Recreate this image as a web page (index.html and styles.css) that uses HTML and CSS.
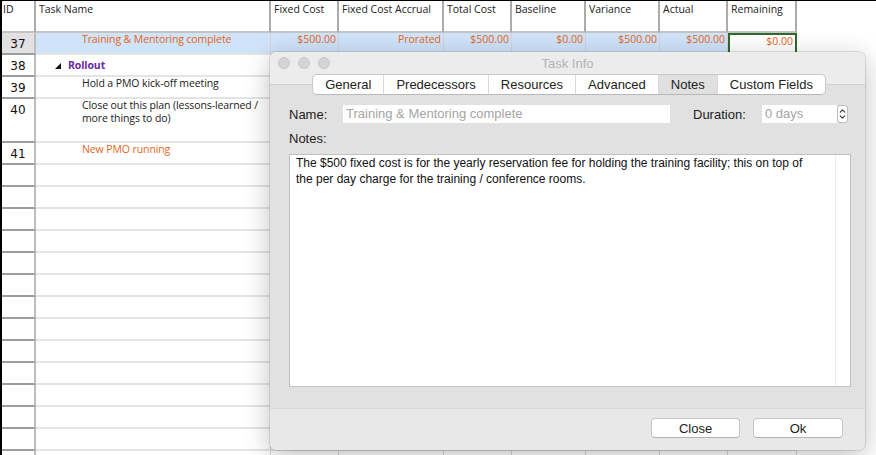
FILE: index.html
```html
<!DOCTYPE html>
<html lang="en">
<head>
    <meta charset="UTF-8">
    <title>Task Info</title>
    <link rel="stylesheet" href="styles.css">
</head>
<body>
    <div class="sheet">
        <div class="row head">
            <div class="cell id">ID</div>
            <div class="cell">Task Name</div>
            <div class="cell">Fixed Cost</div>
            <div class="cell">Fixed Cost Accrual</div>
            <div class="cell">Total Cost</div>
            <div class="cell">Baseline</div>
            <div class="cell">Variance</div>
            <div class="cell">Actual</div>
            <div class="cell">Remaining</div>
        </div>
        <div class="row current">
            <div class="cell id">37</div>
            <div class="cell name sub milestone">Training &amp; Mentoring complete</div>
            <div class="cell num">$500.00</div>
            <div class="cell num">Prorated</div>
            <div class="cell num">$500.00</div>
            <div class="cell num">$0.00</div>
            <div class="cell num">$500.00</div>
            <div class="cell num">$500.00</div>
            <div class="cell num focus">$0.00</div>
        </div>
        <div class="row">
            <div class="cell id">38</div>
            <div class="cell name summary"><span class="toggle"></span>Rollout</div>
            <div class="cell"></div><div class="cell"></div><div class="cell"></div><div class="cell"></div><div class="cell"></div><div class="cell"></div><div class="cell"></div>
        </div>
        <div class="row">
            <div class="cell id">39</div>
            <div class="cell name sub">Hold a PMO kick-off meeting</div>
            <div class="cell"></div><div class="cell"></div><div class="cell"></div><div class="cell"></div><div class="cell"></div><div class="cell"></div><div class="cell"></div>
        </div>
        <div class="row tall">
            <div class="cell id">40</div>
            <div class="cell name sub">Close out this plan (lessons-learned / more things to do)</div>
            <div class="cell"></div><div class="cell"></div><div class="cell"></div><div class="cell"></div><div class="cell"></div><div class="cell"></div><div class="cell"></div>
        </div>
        <div class="row">
            <div class="cell id">41</div>
            <div class="cell name sub milestone">New PMO running</div>
            <div class="cell"></div><div class="cell"></div><div class="cell"></div><div class="cell"></div><div class="cell"></div><div class="cell"></div><div class="cell"></div>
        </div>
        <div class="row"><div class="cell id"></div><div class="cell"></div><div class="cell"></div><div class="cell"></div><div class="cell"></div><div class="cell"></div><div class="cell"></div><div class="cell"></div><div class="cell"></div></div>
        <div class="row"><div class="cell id"></div><div class="cell"></div><div class="cell"></div><div class="cell"></div><div class="cell"></div><div class="cell"></div><div class="cell"></div><div class="cell"></div><div class="cell"></div></div>
        <div class="row"><div class="cell id"></div><div class="cell"></div><div class="cell"></div><div class="cell"></div><div class="cell"></div><div class="cell"></div><div class="cell"></div><div class="cell"></div><div class="cell"></div></div>
        <div class="row"><div class="cell id"></div><div class="cell"></div><div class="cell"></div><div class="cell"></div><div class="cell"></div><div class="cell"></div><div class="cell"></div><div class="cell"></div><div class="cell"></div></div>
        <div class="row"><div class="cell id"></div><div class="cell"></div><div class="cell"></div><div class="cell"></div><div class="cell"></div><div class="cell"></div><div class="cell"></div><div class="cell"></div><div class="cell"></div></div>
        <div class="row"><div class="cell id"></div><div class="cell"></div><div class="cell"></div><div class="cell"></div><div class="cell"></div><div class="cell"></div><div class="cell"></div><div class="cell"></div><div class="cell"></div></div>
        <div class="row"><div class="cell id"></div><div class="cell"></div><div class="cell"></div><div class="cell"></div><div class="cell"></div><div class="cell"></div><div class="cell"></div><div class="cell"></div><div class="cell"></div></div>
        <div class="row"><div class="cell id"></div><div class="cell"></div><div class="cell"></div><div class="cell"></div><div class="cell"></div><div class="cell"></div><div class="cell"></div><div class="cell"></div><div class="cell"></div></div>
        <div class="row"><div class="cell id"></div><div class="cell"></div><div class="cell"></div><div class="cell"></div><div class="cell"></div><div class="cell"></div><div class="cell"></div><div class="cell"></div><div class="cell"></div></div>
        <div class="row"><div class="cell id"></div><div class="cell"></div><div class="cell"></div><div class="cell"></div><div class="cell"></div><div class="cell"></div><div class="cell"></div><div class="cell"></div><div class="cell"></div></div>
        <div class="row"><div class="cell id"></div><div class="cell"></div><div class="cell"></div><div class="cell"></div><div class="cell"></div><div class="cell"></div><div class="cell"></div><div class="cell"></div><div class="cell"></div></div>
        <div class="row"><div class="cell id"></div><div class="cell"></div><div class="cell"></div><div class="cell"></div><div class="cell"></div><div class="cell"></div><div class="cell"></div><div class="cell"></div><div class="cell"></div></div>
        <div class="row"><div class="cell id"></div><div class="cell"></div><div class="cell"></div><div class="cell"></div><div class="cell"></div><div class="cell"></div><div class="cell"></div><div class="cell"></div><div class="cell"></div></div>
        <div class="row"><div class="cell id"></div><div class="cell"></div><div class="cell"></div><div class="cell"></div><div class="cell"></div><div class="cell"></div><div class="cell"></div><div class="cell"></div><div class="cell"></div></div>
    </div>

    <div class="dialog">
        <div class="titlebar">
            <div class="lights">
                <span class="light"></span><span class="light"></span><span class="light"></span>
            </div>
            <div class="title">Task Info</div>
            <div></div>
        </div>
        <div class="tabbar">
            <div class="tabs">
                <div class="tab">General</div>
                <div class="tab">Predecessors</div>
                <div class="tab">Resources</div>
                <div class="tab">Advanced</div>
                <div class="tab selected">Notes</div>
                <div class="tab">Custom Fields</div>
            </div>
        </div>
        <div class="content">
            <div class="field-row">
                <div class="label">Name:</div>
                <div class="input name-input">Training &amp; Mentoring complete</div>
                <div class="label dur-label">Duration:</div>
                <div class="input dur-input">0 days</div>
                <div class="stepper">
                    <svg width="7" height="12" viewBox="0 0 7 12"><path d="M1.2 4.2 L3.5 1.8 L5.8 4.2 M1.2 7.8 L3.5 10.2 L5.8 7.8" fill="none" stroke="#333" stroke-width="1.1" stroke-linecap="round" stroke-linejoin="round"/></svg>
                </div>
            </div>
            <div class="notes-label">Notes:</div>
            <div class="notes">
                <div class="notes-text">The $500 fixed cost is for the yearly reservation fee for holding the training facility; this on top of<br>the per day charge for the training / conference rooms.</div>
                <div class="notes-track"></div>
            </div>
        </div>
        <div class="footer">
            <button class="btn">Close</button>
            <button class="btn ok">Ok</button>
        </div>
    </div>
</body>
</html>
```

FILE: styles.css
```css
body {
    margin: 0;
    height: 455px;
    overflow: hidden;
    background-color: #fff;
}
.sheet {
    border-top: 1px solid #000;
    border-left: 2px solid #000;
    font-family: "Open Sans", sans-serif;
    font-size: 10.5px;
    color: #222;
}
.row {
    display: grid;
    grid-template-columns: 34px 235px 68px 105px 68px 74px 74px 68px 69px;
    height: 22px;
}
.row.tall {
    height: 44px;
}
.row.head {
    height: 32px;
}
.cell {
    box-sizing: border-box;
    border-right: 1px solid #d4d4d4;
    border-bottom: 2px solid #e4e4e4;
    padding: 0 2px;
    line-height: 13px;
    white-space: nowrap;
    overflow: hidden;
}
.cell.id {
    border-right: 2px solid #bdbdbd;
    border-bottom: 2px solid #9d9d9d;
    font-family: "DejaVu Sans", sans-serif;
    font-size: 12px;
    text-align: center;
    line-height: 21px;
    padding-top: 1px;
    color: #111;
}
.head .cell {
    border-right: 2px solid #ababab;
    border-bottom: 2px solid #c4c4c4;
    padding: 2px 3px 0;
    font-family: "Open Sans", sans-serif;
    font-size: 10.5px;
    text-align: left;
    line-height: 13px;
}
.head .cell.id {
    padding-left: 1px;
}
.current .cell {
    background-color: #cfe3f9;
    color: #e4661c;
}
.current .cell.id {
    background-color: #e2e0e2;
    color: #111;
}
.current .cell.focus {
    background-color: #fff;
    border: 2px solid #2c6b2c;
}
.num {
    text-align: right;
}
.name {
    white-space: normal;
    letter-spacing: -0.1px;
    padding-right: 0;
}
.name.sub {
    padding-left: 46px;
}
.name.milestone {
    color: #e4661c;
}
.name.summary {
    padding-left: 19px;
    padding-top: 4px;
    font-weight: bold;
    color: #6b2a9e;
}
.toggle {
    display: inline-block;
    width: 0;
    height: 0;
    border-left: 6px solid transparent;
    border-bottom: 6px solid #111;
    margin-right: 7px;
}

/* task info window */
.dialog {
    position: absolute;
    left: 270px;
    top: 52px;
    width: 595px;
    height: 398px;
    background-color: #e1e1e1;
    border-radius: 6px;
    overflow: hidden;
    box-shadow: 0 0 0 1px rgba(0, 0, 0, 0.1), 0 6px 26px rgba(0, 0, 0, 0.25);
    display: flex;
    flex-direction: column;
    font-family: "Liberation Sans", Arial, sans-serif;
    font-size: 13px;
    color: #222;
}
.titlebar {
    height: 22px;
    background-color: #ececec;
    display: grid;
    grid-template-columns: 1fr auto 1fr;
    align-items: center;
}
.lights {
    display: flex;
    gap: 8px;
    padding-left: 8px;
}
.light {
    width: 12px;
    height: 12px;
    border-radius: 50%;
    background-color: #d5d5d5;
    border: 1px solid #c7c7c7;
    box-sizing: border-box;
}
.title {
    color: #b3b3b3;
}
.tabbar {
    height: 21px;
    background: linear-gradient(#ececec 0 10px, #d0d0d0 10px 11px, #e1e1e1 11px);
    display: flex;
    justify-content: center;
    padding-left: 3px;
}
.tabs {
    display: flex;
    background-color: #fff;
    border: 1px solid #c8c8c8;
    border-bottom-color: #b9b9b9;
    border-radius: 5px;
    overflow: hidden;
    box-sizing: border-box;
    height: 21px;
}
.tab {
    padding: 0 12px;
    line-height: 19px;
    border-left: 1px solid #d9d9d9;
}
.tab:first-child {
    border-left: none;
}
.tab.selected {
    background-color: #e0e0e0;
}
.content {
    flex: 1;
    padding: 10px 0 0 19px;
}
.field-row {
    display: flex;
    align-items: center;
    height: 18px;
}
.label {
    width: 54px;
}
.input {
    box-sizing: border-box;
    height: 18px;
    line-height: 18px;
    padding: 0 3px;
    background-color: #fff;
    color: #a4a4a4;
}
.name-input {
    width: 327px;
}
.dur-label {
    margin-left: 23px;
    width: 69px;
}
.dur-input {
    width: 75px;
}
.stepper {
    box-sizing: border-box;
    width: 11px;
    height: 18px;
    background-color: #fff;
    border: 1px solid #bdbdbd;
    border-radius: 3px;
    display: flex;
    align-items: center;
    justify-content: center;
}
.notes-label {
    margin-top: 8px;
    line-height: 16px;
}
.notes {
    margin-top: 7px;
    width: 562px;
    height: 233px;
    box-sizing: border-box;
    background-color: #fff;
    border: 1px solid #c2c2c2;
    display: flex;
}
.notes-text {
    flex: 1;
    padding: 0 6px;
    font-size: 12px;
    line-height: 16px;
    color: #111;
}
.notes-track {
    width: 14px;
    border-left: 1px solid #ebebeb;
}
.footer {
    height: 42px;
    box-sizing: border-box;
    background-color: #e8e8e8;
    border-top: 1px solid #dadada;
    display: flex;
    justify-content: flex-end;
    align-items: flex-start;
    gap: 13px;
    padding: 9px 22px 0 0;
}
.btn {
    width: 89px;
    height: 20px;
    box-sizing: border-box;
    background-color: #fff;
    border: 1px solid #c6c6c6;
    border-bottom-color: #b2b2b2;
    border-radius: 4px;
    font-family: "Liberation Sans", Arial, sans-serif;
    font-size: 13px;
    color: #222;
    padding: 0;
}
.btn.ok {
    width: 90px;
}
```
